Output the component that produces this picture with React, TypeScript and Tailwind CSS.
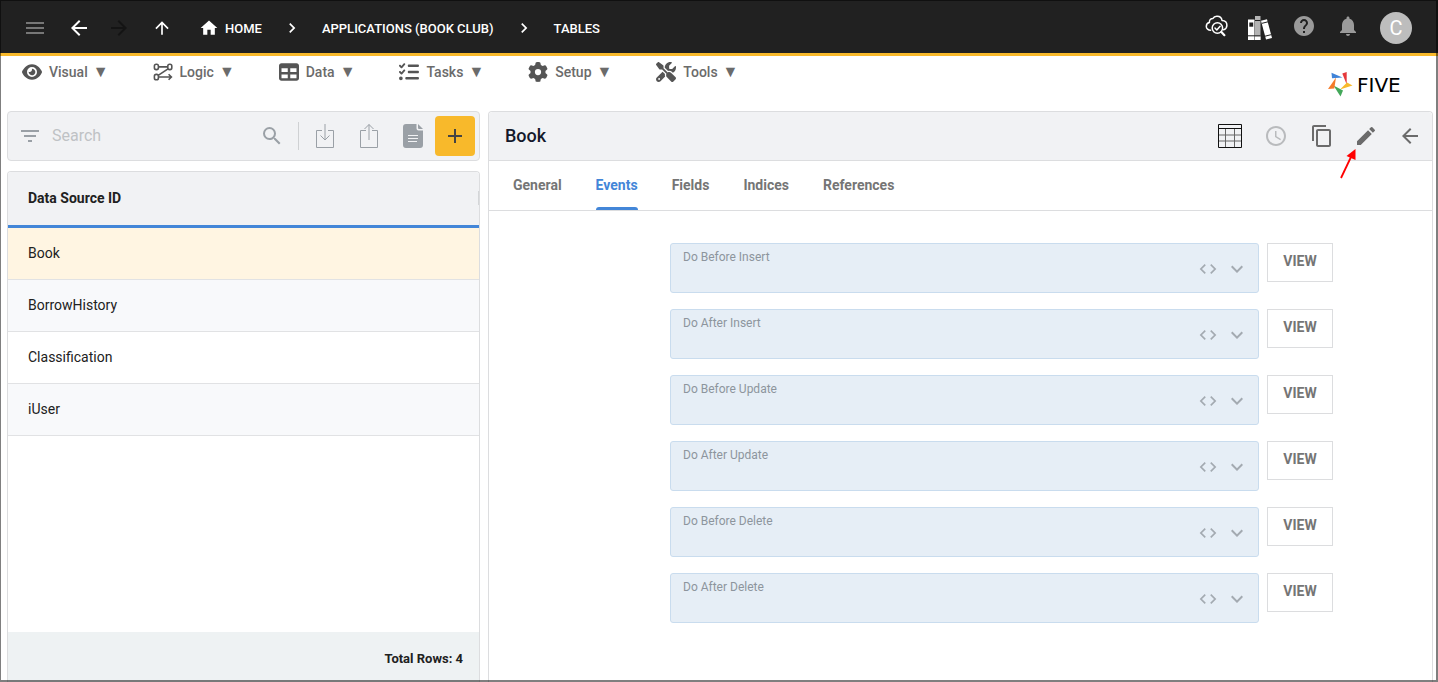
import { useState } from 'react';
import type { ReactNode } from 'react';
import {
    MdAdd, MdAccessTime, MdArrowBack, MdArrowForward, MdArrowUpward, MdChevronRight, MdCode,
    MdContentCopy, MdEdit, MdExpandMore, MdFilterList, MdHelp, MdHome, MdMenu, MdNotifications, MdSearch,
} from 'react-icons/md';
import { FaEye, FaGear, FaListCheck, FaScrewdriverWrench, FaTable } from 'react-icons/fa6';

const tables = ['Book', 'BorrowHistory', 'Classification', 'iUser'];
const tabs = ['General', 'Events', 'Fields', 'Indices', 'References'];
const events = [
    'Do Before Insert',
    'Do After Insert',
    'Do Before Update',
    'Do After Update',
    'Do Before Delete',
    'Do After Delete',
];

function LogicIcon() {
    return (
        <svg width="20" height="18" viewBox="0 0 20 18" fill="none" stroke="currentColor" strokeWidth="1.6">
            <rect x="1.4" y="1.2" width="4" height="5.4" rx="1.8" />
            <rect x="14.8" y="1.2" width="4" height="5.4" rx="1.8" />
            <rect x="1.4" y="11.4" width="4" height="5.4" rx="1.8" />
            <path d="M5.4 3.9h9.4M15 5.8 5.2 12.4M5.4 14h12.4M15.6 11.2l2.8 2.8-2.8 2.8" />
        </svg>
    )
}

function CloudSearchIcon() {
    return (
        <svg width="24" height="24" viewBox="0 0 24 24" fill="none" stroke="currentColor" strokeWidth="1.5" strokeLinecap="round" strokeLinejoin="round">
            <path d="M6.600 16.200C4.200 16.200 2.300 14.500 2.300 12.400c0-2 1.300-3.500 3.100-3.900-.3-2.400 1.400-4.200 3.600-4.100C9.700 2.900 11.400 2.100 13.200 2.200c2.600.1 4.500 1.900 4.800 4.200 2.900.1 4.900 2 4.900 4.800 0 2.300-1.200 3.900-3.200 4.500" />
            <circle cx="13.400" cy="14" r="5.200" />
            <path d="m17.400 18 3 3.200" strokeWidth="2.200" />
            <path d="m11 14 1.800 1.900 3.300-3.700" />
        </svg>
    )
}

function LibraryIcon() {
    return (
        <svg width="24" height="24" viewBox="0 0 24 24" fill="currentColor">
            <path d="M0 3.500h6.500V24H0z" />
            <path d="M7 0h5.500v24H7z" fill="#b4b4b4" />
            <path d="M7 20.500h5.500V24H7z" />
            <path d="m13 4.800 6-1.500 5 18.700-6 1.600z" />
            <path d="M1.300 6.500h3.900v4.200H1.300z" fill="#212121" />
            <path d="M0 19.800h12.500M7 4.500h5.500M14 7.300l6-1.500M17 20.200l6-1.500" stroke="#212121" strokeWidth="1" />
        </svg>
    )
}

function ImportIcon() {
    return (
        <svg width="20" height="26" viewBox="0 0 20 26" fill="none" stroke="currentColor" strokeWidth="1">
            <path d="M7 7.500H1.500v17h17v-17H13" />
            <path d="M10 1v16M5.500 12.500 10 17l4.500-4.500" />
        </svg>
    )
}

function ExportIcon() {
    return (
        <svg width="20" height="26" viewBox="0 0 20 26" fill="none" stroke="currentColor" strokeWidth="1">
            <path d="M7 7.500H1.500v17h17v-17H13" />
            <path d="M10 17V1.500M5.500 6 10 1.500 14.500 6" />
        </svg>
    )
}

function ReportIcon() {
    return (
        <svg width="20" height="24" viewBox="0 0 20 24">
            <path d="M3 0h10.500v4.500a2 2 0 0 0 2 2H20V21a3 3 0 0 1-3 3H3a3 3 0 0 1-3-3V3a3 3 0 0 1 3-3z" fill="currentColor" />
            <path d="m15 0 5 5h-4a1 1 0 0 1-1-1z" fill="currentColor" />
            <path d="M5 11.500h10M5 14.500h10M5 17.500h9" stroke="#f1f2f4" strokeWidth="1.200" />
        </svg>
    )
}

function GridIcon() {
    return (
        <svg width="24" height="24" viewBox="0 0 24 24" fill="none">
            <path d="M1 11h22M1 17h22M7.500 5v18M16.500 5v18" stroke="#666" />
            <path d="M.5.500h23v23H.5zM0 4.500h24" stroke="#111" />
        </svg>
    )
}

function FiveLogo() {
    return (
        <div className="w-[88px] flex items-center gap-1 text-black">
            <svg width="25" height="25" viewBox="0 0 25 25" className="shrink-0">
                <path d="M3.500.800 14.500 5.600 4 6.200z" fill="#3f83d8" />
                <path d="M18.700 0v12.500L14.300 1.500z" fill="#e5383b" />
                <path d="M24.500 13.500 12 17.500l7-7z" fill="#f8b92b" />
                <path d="M12.500 24.500 5.500 13.500l9.500 5z" fill="#43a85a" />
                <path d="m0 17 8-11.500L6.300 16.500z" fill="#f47b2a" />
            </svg>
            <span className="text-xl leading-6 font-[DejaVu_Sans,sans-serif]">FIVE</span>
        </div>
    )
}

const menus: { label: string; icon: ReactNode }[] = [
    { label: 'Visual', icon: <FaEye size={20} /> },
    { label: 'Logic', icon: <LogicIcon /> },
    { label: 'Data', icon: <FaTable size={20} /> },
    { label: 'Tasks', icon: <FaListCheck size={20} /> },
    { label: 'Setup', icon: <FaGear size={20} /> },
    { label: 'Tools', icon: <FaScrewdriverWrench size={20} /> },
];

function TopBar() {
    return (
        <header className="h-14 shrink-0 flex items-center justify-between border-b-[3px] border-[#f8b92b] bg-[#212121] pt-[3px] pl-[23px] pr-[26px] text-white">
            <div className="flex items-center">
                <button aria-label="Menu" className="text-[#777]"><MdMenu size={24} /></button>
                <button aria-label="Back" className="ml-5"><MdArrowBack size={24} /></button>
                <button aria-label="Forward" className="ml-4 text-[#141414]"><MdArrowForward size={24} /></button>
                <button aria-label="Up" className="ml-[21px]"><MdArrowUpward size={20} /></button>
                <nav className="ml-[27px] flex items-center text-[13px] font-medium">
                    <a href="#home" className="flex items-center gap-1.5"><MdHome size={20} /><span className="pt-px">HOME</span></a>
                    <MdChevronRight size={20} className="mx-5" />
                    <a href="#applications" className="pt-px">APPLICATIONS (BOOK CLUB)</a>
                    <MdChevronRight size={20} className="mx-5" />
                    <a href="#tables" className="pt-px">TABLES</a>
                </nav>
            </div>
            <div className="flex items-center gap-5">
                <button aria-label="Inspect" className="mb-1"><CloudSearchIcon /></button>
                <button aria-label="Library"><LibraryIcon /></button>
                <button aria-label="Help" className="mb-1 text-[#9a9a9a]"><MdHelp size={24} /></button>
                <button aria-label="Notifications" className="mb-1 text-[#9a9a9a]"><MdNotifications size={24} /></button>
                <button className="size-8 rounded-full bg-[#bdbdbd] text-xl">C</button>
            </div>
        </header>
    )
}

function MenuBar() {
    return (
        <div className="h-[55px] shrink-0 flex items-start justify-between px-[22px]">
            <nav className="flex gap-11 pt-1.5 text-sm font-medium text-[#6b6b6b]">
                {menus.map(({ label, icon }) => (
                    <button key={label} className="flex items-center gap-[7px]">
                        <span className="text-[#555]">{icon}</span>
                        <span className="flex items-center gap-[5px]">{label}<span className="text-base leading-5">▼</span></span>
                    </button>
                ))}
            </nav>
            <div className="pt-4"><FiveLogo /></div>
        </div>
    )
}

function TableList({ selected, onSelect }: { selected: string; onSelect: (name: string) => void }) {
    return (
        <section className="w-[473px] shrink-0 flex flex-col gap-2.5">
            <div className="h-[50px] shrink-0 flex items-center rounded border border-[#dcdddf] bg-[#f1f2f4] pl-2.5 pr-1 text-[#9aa0a6]">
                <button aria-label="Filter"><MdFilterList size={24} /></button>
                <input aria-label="Search" placeholder="Search" className="ml-2.5 min-w-0 flex-1 bg-transparent text-base text-gray-700 outline-none placeholder:text-[#bfc2c5]" />
                <button aria-label="Run search"><MdSearch size={24} /></button>
                <span className="ml-3.5 h-7 w-px bg-[#cfd1d3]" />
                <button aria-label="Import" className="ml-4"><ImportIcon /></button>
                <button aria-label="Export" className="ml-6"><ExportIcon /></button>
                <button aria-label="Report" className="ml-6"><ReportIcon /></button>
                <button aria-label="Add" className="ml-3 size-10 flex items-center justify-center rounded bg-[#f8b92b] text-[#444]">
                    <MdAdd size={24} />
                </button>
            </div>
            <div className="min-h-0 flex-1 flex flex-col overflow-hidden rounded-t border border-b-0 border-[#dcdddf]">
                <table className="w-full border-separate border-spacing-0 text-left text-sm text-[#212121]">
                    <thead>
                        <tr>
                            <th className="h-14 border-b-[3px] border-[#4386d8] bg-[#f1f2f4] pb-0.5 pl-5 font-bold">
                                <div className="flex items-center justify-between">
                                    Data Source ID
                                    <span className="h-3.5 w-px bg-[#d4d6d8]" />
                                </div>
                            </th>
                        </tr>
                    </thead>
                    <tbody>
                        {tables.map((name) => (
                            <tr
                                key={name} onClick={() => onSelect(name)}
                                className={`cursor-pointer ${name === selected ? 'bg-[#fff5e2]' : 'even:bg-[#f8f9fb]'}`}
                            >
                                <td className="h-[52px] border-b border-[#e1e2e4] pb-0.5 pl-5">{name}</td>
                            </tr>
                        ))}
                    </tbody>
                </table>
                <div className="mt-auto h-[50px] shrink-0 flex items-center justify-end bg-[#eef2f3] pt-1 pr-4 text-[13px] font-bold text-[#212121]">
                    Total Rows: {tables.length}
                </div>
            </div>
        </section>
    )
}

function EventField({ label }: { label: string }) {
    const id = label.toLowerCase().replace(/ /g, '-');

    return (
        <div className="flex items-start gap-2">
            <div className="h-[50px] min-w-0 flex-1 flex rounded-[3px] border border-[#c9dcee] bg-[#e6eef6] pl-3 pr-[9px] text-[#a3aab1]">
                <div className="min-w-0 flex-1 flex flex-col pt-[5px]">
                    <label htmlFor={id} className="text-xs text-[#8d959d]">{label}</label>
                    <select id={id} className="min-h-0 flex-1 appearance-none bg-transparent text-sm text-gray-700 outline-none">
                        <option value=""></option>
                    </select>
                </div>
                <div className="flex items-center gap-[7px] pt-0.5">
                    <button aria-label={`Edit code: ${label}`}><MdCode size={20} /></button>
                    <MdExpandMore size={24} />
                </div>
            </div>
            <button className="h-[39px] w-[66px] shrink-0 border border-[#dcdddf] bg-white pb-1 text-sm font-bold text-[#757575]">VIEW</button>
        </div>
    )
}

function TableDetail({ name }: { name: string }) {
    const [tab, setTab] = useState('Events');

    return (
        <section className="min-w-0 flex-1 rounded-t border border-b-0 border-[#dcdddf]">
            <div className="h-12 flex items-center justify-between rounded-t bg-[#f1f2f4] pl-4 pr-2.5">
                <h1 className="text-lg font-medium text-[#14192b]">{name}</h1>
                <div className="flex items-center gap-5 text-[#6b6b6b]">
                    <button aria-label="Data view" className="mr-0.5"><GridIcon /></button>
                    <button aria-label="History" className="mr-0.5 text-[#b9bbbd]"><MdAccessTime size={24} /></button>
                    <button aria-label="Copy"><MdContentCopy size={24} /></button>
                    <button aria-label="Edit" className="relative">
                        <MdEdit size={24} />
                        <svg className="absolute -left-4 top-6" width="20" height="32" viewBox="0 0 20 32">
                            <path d="M3 30 13 9" stroke="#f00" strokeWidth="1.800" />
                            <path d="M17.500 1v11L8.500 8z" fill="#f00" />
                        </svg>
                    </button>
                    <button aria-label="Close"><MdArrowBack size={24} /></button>
                </div>
            </div>
            <div role="tablist" className="h-[51px] flex gap-[34px] border-y border-[#dcdddf] pl-6 text-sm font-bold text-[#757575]">
                {tabs.map((item) => (
                    <button
                        key={item} role="tab" aria-selected={item === tab} onClick={() => setTab(item)}
                        className={`relative pb-px ${item === tab ? 'text-[#4386d8]' : ''}`}
                    >
                        {item}
                        {item === tab && <span className="absolute inset-x-0 bottom-0 h-[3px] rounded-t-sm bg-[#4386d8]" />}
                    </button>
                ))}
            </div>
            <div className="flex flex-col gap-4 pt-8 pl-[181px] pr-[99px]">
                {events.map((label) => <EventField key={label} label={label} />)}
            </div>
        </section>
    )
}

export default function App() {
    const [selected, setSelected] = useState('Book');

    return (
        <div className="relative h-screen flex flex-col overflow-hidden bg-white font-[Roboto,sans-serif]">
            <TopBar />
            <MenuBar />
            <main className="min-h-0 flex-1 flex gap-2 pl-[7px] pr-[5px]">
                <TableList selected={selected} onSelect={setSelected} />
                <TableDetail name={selected} />
            </main>
            <div className="pointer-events-none absolute inset-0 border-t border-l border-r-2 border-b-2 border-black/50" />
        </div>
    )
}
